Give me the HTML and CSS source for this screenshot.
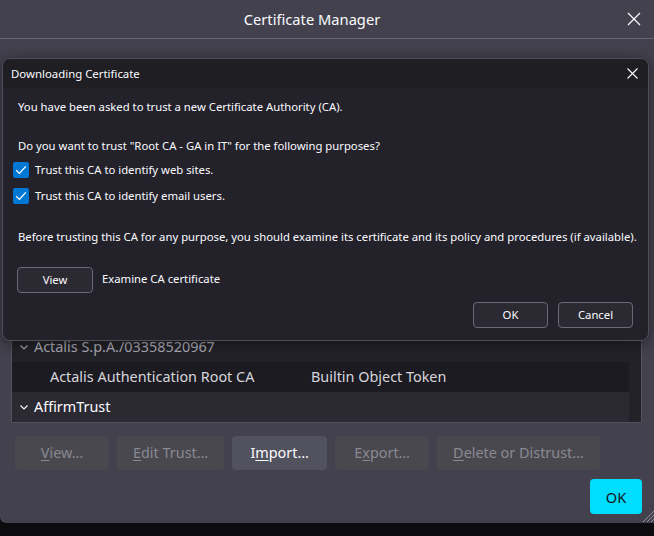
FILE: index.html
```html
<!DOCTYPE html>
<html lang="en">
<head>
<meta charset="utf-8">
<title>Certificate Manager</title>
<link rel="stylesheet" href="styles.css">
</head>
<body>
<div class="window">
  <div class="titlebar">
    <div class="title">Certificate Manager</div>
    <button class="win-close" aria-label="Close">
      <svg width="14" height="14" viewBox="0 0 14 14"><path d="M1 1L13 13M13 1L1 13" stroke="#fbfbfe" stroke-width="1.2" fill="none"/></svg>
    </button>
  </div>
  <div class="main">
    <div class="tree">
      <div class="rows">
        <div class="row head"><span class="c1">Certificate Name</span><span class="c2">Security Device</span></div>
        <div class="row group"><svg class="chev" width="8" height="5" viewBox="0 0 8 5"><path d="M0.5 0.5L4 4L7.5 0.5" stroke="currentColor" stroke-width="1.1" fill="none"/></svg><span>ACCV</span></div>
        <div class="row item"><span class="c1">ACCVRAIZ1</span><span class="c2">Builtin Object Token</span></div>
        <div class="row group dim"><svg class="chev" width="8" height="5" viewBox="0 0 8 5"><path d="M0.5 0.5L4 4L7.5 0.5" stroke="currentColor" stroke-width="1.1" fill="none"/></svg><span>Actalis S.p.A./03358520967</span></div>
        <div class="row item mid"><span class="c1">Actalis Authentication Root CA</span><span class="c2">Builtin Object Token</span></div>
        <div class="row group alt"><svg class="chev" width="8" height="5" viewBox="0 0 8 5"><path d="M0.5 0.5L4 4L7.5 0.5" stroke="currentColor" stroke-width="1.1" fill="none"/></svg><span>AffirmTrust</span></div>
      </div>
      <div class="scrollbar"></div>
    </div>
    <div class="actions">
      <button class="btn" disabled><u>V</u>iew…</button>
      <button class="btn" disabled><u>E</u>dit Trust…</button>
      <button class="btn enabled">I<u>m</u>port…</button>
      <button class="btn" disabled>E<u>x</u>port…</button>
      <button class="btn" disabled><u>D</u>elete or Distrust…</button>
    </div>
    <div class="footer">
      <button class="primary">OK</button>
    </div>
    <svg class="grip" width="12" height="12" viewBox="0 0 12 12"><path d="M12 1L1 12M12 5L5 12M12 9L9 12" stroke="#8f8f9d" stroke-width="1" fill="none"/></svg>
  </div>
</div>
<div class="taskbar"></div>

<div class="dialog">
  <div class="dlg-head">
    <span class="dlg-title">Downloading Certificate</span>
    <button class="dlg-close" aria-label="Close">
      <svg width="11" height="11" viewBox="0 0 11 11"><path d="M0.5 0.5L10.5 10.5M10.5 0.5L0.5 10.5" stroke="#fbfbfe" stroke-width="1.1" fill="none"/></svg>
    </button>
  </div>
  <div class="dlg-body">
    <p class="line l1">You have been asked to trust a new Certificate Authority (CA).</p>
    <p class="line l2">Do you want to trust "Root CA - GA in IT" for the following purposes?</p>
    <label class="check c-first"><span class="box"><svg width="16" height="16" viewBox="0 0 16 16"><path d="M3.2 8.3L6.4 11.4L12.8 4.4" stroke="#fff" stroke-width="1.3" fill="none"/></svg></span>Trust this CA to identify web sites.</label>
    <label class="check c-second"><span class="box"><svg width="16" height="16" viewBox="0 0 16 16"><path d="M3.2 8.3L6.4 11.4L12.8 4.4" stroke="#fff" stroke-width="1.3" fill="none"/></svg></span>Trust this CA to identify email users.</label>
    <p class="line l3">Before trusting this CA for any purpose, you should examine its certificate and its policy and procedures (if available).</p>
    <div class="view-row">
      <button class="dbtn view">View</button>
      <span class="examine">Examine CA certificate</span>
    </div>
    <div class="dlg-actions">
      <button class="dbtn">OK</button>
      <button class="dbtn">Cancel</button>
    </div>
  </div>
</div>
</body>
</html>
```
FILE: styles.css
```css
* { box-sizing: border-box; }
html, body { margin: 0; padding: 0; }
body {
  width: 654px;
  height: 536px;
  overflow: hidden;
  background: #0c0c0f;
  font-family: "Noto Sans", "Open Sans", sans-serif;
  color: #fbfbfe;
  position: relative;
}
button { font-family: inherit; }

.window {
  height: 523px;
  background: #42414d;
  border-radius: 0 0 0 6px;
  display: flex;
  flex-direction: column;
}
.titlebar {
  height: 39px;
  border-bottom: 1px solid #66656f;
  display: flex;
  align-items: center;
  position: relative;
}
.title {
  flex: 1;
  text-align: center;
  padding-right: 30px;
  font-size: 14.7px;
  color: #fbfbfe;
  padding-bottom: 1px;
}
.win-close {
  position: absolute;
  right: 13px;
  top: 12px;
  width: 14px;
  height: 14px;
  padding: 0;
  border: 0;
  background: none;
  display: flex;
}

.main {
  flex: 1;
  display: flex;
  flex-direction: column;
  padding: 21px 12px 9px 11px;
  position: relative;
}
.tree {
  flex: 1;
  border: 1px solid #55545e;
  border-radius: 2px;
  background: #1c1b22;
  display: flex;
  overflow: hidden;
}
.rows {
  flex: 1;
  display: flex;
  flex-direction: column;
  justify-content: flex-end;
}
.row {
  height: 30px;
  display: flex;
  align-items: center;
  font-size: 14.4px;
  white-space: nowrap;
  color: #fbfbfe;
  padding-bottom: 2px;
}
.row.head { background: #2b2a33; padding-left: 38px; }
.row.group { padding-left: 8px; gap: 6px; background: #2b2a33; }
.row.item { padding-left: 38px; background: #1c1b22; }
.row .c1 { width: 261px; }
.row.dim { background: #222128; color: #a9a8b1; }
.row.mid { color: #d7d6dd; }
.row.alt { background: #2b2a33; color: #fbfbfe; }
.chev { flex: none; margin-top: 2px; }
.scrollbar { width: 12px; background: #232229; }

.actions {
  margin-top: 13px;
  height: 34px;
  display: flex;
  gap: 8px;
  padding-left: 4px;
}
.btn {
  min-width: 94px;
  height: 34px;
  padding: 0 16px 2px;
  border: 0;
  border-radius: 4px;
  background: #49484f;
  color: #8a8993;
  font-size: 14.4px;
}
.btn u { text-underline-offset: 2px; }
.btn.enabled { background: #52515e; color: #fbfbfe; min-width: 95px; }

.footer {
  margin-top: 9px;
  display: flex;
  justify-content: flex-end;
}
.primary {
  width: 52px;
  height: 35px;
  border: 0;
  border-radius: 4px;
  background: #00ddff;
  color: #15141a;
  font-size: 14.6px;
  padding: 0;
}
.grip { position: absolute; right: 0; bottom: 1px; }

.taskbar { height: 13px; background: #0c0c0f; }

/* overlay dialog */
.dialog {
  position: absolute;
  left: 2px;
  top: 58px;
  width: 647px;
  height: 283px;
  border: 1px solid #4f4e58;
  border-radius: 8px;
  background: #23222b;
  box-shadow: 0 2px 14px rgba(0, 0, 0, 0.45);
  overflow: hidden;
  display: flex;
  flex-direction: column;
  font-size: 11.3px;
}
.dlg-head {
  height: 29px;
  background: #1e1e23;
  display: flex;
  align-items: center;
  padding-left: 8px;
  position: relative;
}
.dlg-title { font-size: 11.4px; padding-bottom: 1px; }
.dlg-close {
  position: absolute;
  right: 10px;
  top: 9px;
  width: 11px;
  height: 11px;
  padding: 0;
  border: 0;
  background: none;
  display: flex;
}
.dlg-body {
  flex: 1;
  padding: 11px 14px 0 14px;
  display: flex;
  flex-direction: column;
}
.line { margin: 0; line-height: 16px; padding-left: 1px; white-space: nowrap; }
.l2 { margin-top: 23px; }
.check {
  display: flex;
  align-items: center;
  gap: 6px;
  line-height: 16px;
  margin-left: -4px;
}
.c-first { margin-top: 8px; }
.c-second { margin-top: 10px; }
.box {
  width: 16px;
  height: 16px;
  border-radius: 2px;
  background: #0078d4;
  display: flex;
}
.l3 { margin-top: 25px; }
.view-row {
  margin-top: 22px;
  display: flex;
  align-items: center;
  gap: 9px;
}
.examine { padding-bottom: 3px; }
.dbtn {
  height: 26px;
  border: 1px solid #6b6a74;
  border-radius: 4px;
  background: #2b2a33;
  color: #fbfbfe;
  font-size: 11.3px;
  width: 75px;
  padding: 0 0 1px;
}
.view { width: 76px; }
.dlg-actions {
  margin-top: 9px;
  display: flex;
  justify-content: flex-end;
  gap: 10px;
  padding-right: 1px;
}
```
